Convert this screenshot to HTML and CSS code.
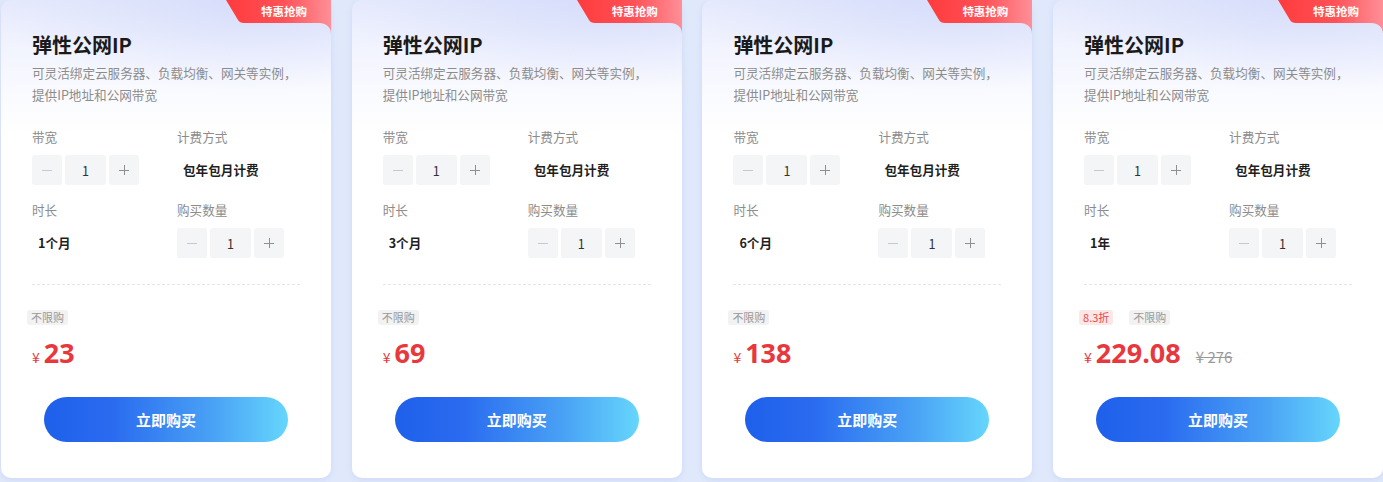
FILE: index.html
```html
<!DOCTYPE html>
<html lang="zh-CN">
<head>
    <meta charset="UTF-8">
    <meta name="viewport" content="width=device-width, initial-scale=1.0">
    <title>弹性公网IP</title>
    <link rel="stylesheet" href="styles.css">
</head>
<body>
    <div class="page">

        <div class="card">
            <div class="badge">
                <svg width="105" height="34" viewBox="0 0 105 34"><defs><linearGradient id="bg1" x1="0" x2="1" y1="0" y2="0"><stop offset="0" stop-color="#ff3b3d"/><stop offset="0.55" stop-color="#ff5257"/><stop offset="1" stop-color="#ff8f98"/></linearGradient></defs><path d="M0 0H105V34C105 27 100 23 93 23H18C15 23 13 22 12 20Z" fill="url(#bg1)"/></svg>
                <span>特惠抢购</span>
            </div>
            <h2 class="title">弹性公网IP</h2>
            <p class="desc">可灵活绑定云服务器、负载均衡、网关等实例，<br>提供IP地址和公网带宽</p>
            <div class="form">
                <div class="field">
                    <div class="label">带宽</div>
                    <div class="stepper">
                        <span class="btn minus"><svg width="10" height="10"><path d="M0 5.5H10" stroke="#c9c9c9"/></svg></span>
                        <span class="val">1</span>
                        <span class="btn"><svg width="10" height="10"><path d="M0 5.5H10M5.5 0V10" stroke="#8f8f8f"/></svg></span>
                    </div>
                </div>
                <div class="field">
                    <div class="label">计费方式</div>
                    <div class="value">包年包月计费</div>
                </div>
                <div class="field">
                    <div class="label">时长</div>
                    <div class="value">1个月</div>
                </div>
                <div class="field">
                    <div class="label">购买数量</div>
                    <div class="stepper">
                        <span class="btn minus"><svg width="10" height="10"><path d="M0 5.5H10" stroke="#c9c9c9"/></svg></span>
                        <span class="val">1</span>
                        <span class="btn"><svg width="10" height="10"><path d="M0 5.5H10M5.5 0V10" stroke="#8f8f8f"/></svg></span>
                    </div>
                </div>
            </div>
            <div class="divider"></div>
            <div class="tags"><span class="tag">不限购</span></div>
            <div class="price"><span class="cur">¥</span><span class="num">23</span></div>
            <button class="buy">立即购买</button>
        </div>

        <div class="card">
            <div class="badge">
                <svg width="105" height="34" viewBox="0 0 105 34"><defs><linearGradient id="bg2" x1="0" x2="1" y1="0" y2="0"><stop offset="0" stop-color="#ff3b3d"/><stop offset="0.55" stop-color="#ff5257"/><stop offset="1" stop-color="#ff8f98"/></linearGradient></defs><path d="M0 0H105V34C105 27 100 23 93 23H18C15 23 13 22 12 20Z" fill="url(#bg2)"/></svg>
                <span>特惠抢购</span>
            </div>
            <h2 class="title">弹性公网IP</h2>
            <p class="desc">可灵活绑定云服务器、负载均衡、网关等实例，<br>提供IP地址和公网带宽</p>
            <div class="form">
                <div class="field">
                    <div class="label">带宽</div>
                    <div class="stepper">
                        <span class="btn minus"><svg width="10" height="10"><path d="M0 5.5H10" stroke="#c9c9c9"/></svg></span>
                        <span class="val">1</span>
                        <span class="btn"><svg width="10" height="10"><path d="M0 5.5H10M5.5 0V10" stroke="#8f8f8f"/></svg></span>
                    </div>
                </div>
                <div class="field">
                    <div class="label">计费方式</div>
                    <div class="value">包年包月计费</div>
                </div>
                <div class="field">
                    <div class="label">时长</div>
                    <div class="value">3个月</div>
                </div>
                <div class="field">
                    <div class="label">购买数量</div>
                    <div class="stepper">
                        <span class="btn minus"><svg width="10" height="10"><path d="M0 5.5H10" stroke="#c9c9c9"/></svg></span>
                        <span class="val">1</span>
                        <span class="btn"><svg width="10" height="10"><path d="M0 5.5H10M5.5 0V10" stroke="#8f8f8f"/></svg></span>
                    </div>
                </div>
            </div>
            <div class="divider"></div>
            <div class="tags"><span class="tag">不限购</span></div>
            <div class="price"><span class="cur">¥</span><span class="num">69</span></div>
            <button class="buy">立即购买</button>
        </div>

        <div class="card">
            <div class="badge">
                <svg width="105" height="34" viewBox="0 0 105 34"><defs><linearGradient id="bg3" x1="0" x2="1" y1="0" y2="0"><stop offset="0" stop-color="#ff3b3d"/><stop offset="0.55" stop-color="#ff5257"/><stop offset="1" stop-color="#ff8f98"/></linearGradient></defs><path d="M0 0H105V34C105 27 100 23 93 23H18C15 23 13 22 12 20Z" fill="url(#bg3)"/></svg>
                <span>特惠抢购</span>
            </div>
            <h2 class="title">弹性公网IP</h2>
            <p class="desc">可灵活绑定云服务器、负载均衡、网关等实例，<br>提供IP地址和公网带宽</p>
            <div class="form">
                <div class="field">
                    <div class="label">带宽</div>
                    <div class="stepper">
                        <span class="btn minus"><svg width="10" height="10"><path d="M0 5.5H10" stroke="#c9c9c9"/></svg></span>
                        <span class="val">1</span>
                        <span class="btn"><svg width="10" height="10"><path d="M0 5.5H10M5.5 0V10" stroke="#8f8f8f"/></svg></span>
                    </div>
                </div>
                <div class="field">
                    <div class="label">计费方式</div>
                    <div class="value">包年包月计费</div>
                </div>
                <div class="field">
                    <div class="label">时长</div>
                    <div class="value">6个月</div>
                </div>
                <div class="field">
                    <div class="label">购买数量</div>
                    <div class="stepper">
                        <span class="btn minus"><svg width="10" height="10"><path d="M0 5.5H10" stroke="#c9c9c9"/></svg></span>
                        <span class="val">1</span>
                        <span class="btn"><svg width="10" height="10"><path d="M0 5.5H10M5.5 0V10" stroke="#8f8f8f"/></svg></span>
                    </div>
                </div>
            </div>
            <div class="divider"></div>
            <div class="tags"><span class="tag">不限购</span></div>
            <div class="price"><span class="cur">¥</span><span class="num">138</span></div>
            <button class="buy">立即购买</button>
        </div>

        <div class="card">
            <div class="badge">
                <svg width="105" height="34" viewBox="0 0 105 34"><defs><linearGradient id="bg4" x1="0" x2="1" y1="0" y2="0"><stop offset="0" stop-color="#ff3b3d"/><stop offset="0.55" stop-color="#ff5257"/><stop offset="1" stop-color="#ff8f98"/></linearGradient></defs><path d="M0 0H105V34C105 27 100 23 93 23H18C15 23 13 22 12 20Z" fill="url(#bg4)"/></svg>
                <span>特惠抢购</span>
            </div>
            <h2 class="title">弹性公网IP</h2>
            <p class="desc">可灵活绑定云服务器、负载均衡、网关等实例，<br>提供IP地址和公网带宽</p>
            <div class="form">
                <div class="field">
                    <div class="label">带宽</div>
                    <div class="stepper">
                        <span class="btn minus"><svg width="10" height="10"><path d="M0 5.5H10" stroke="#c9c9c9"/></svg></span>
                        <span class="val">1</span>
                        <span class="btn"><svg width="10" height="10"><path d="M0 5.5H10M5.5 0V10" stroke="#8f8f8f"/></svg></span>
                    </div>
                </div>
                <div class="field">
                    <div class="label">计费方式</div>
                    <div class="value">包年包月计费</div>
                </div>
                <div class="field">
                    <div class="label">时长</div>
                    <div class="value">1年</div>
                </div>
                <div class="field">
                    <div class="label">购买数量</div>
                    <div class="stepper">
                        <span class="btn minus"><svg width="10" height="10"><path d="M0 5.5H10" stroke="#c9c9c9"/></svg></span>
                        <span class="val">1</span>
                        <span class="btn"><svg width="10" height="10"><path d="M0 5.5H10M5.5 0V10" stroke="#8f8f8f"/></svg></span>
                    </div>
                </div>
            </div>
            <div class="divider"></div>
            <div class="tags"><span class="tag discount">8.3折</span><span class="tag">不限购</span></div>
            <div class="price"><span class="cur">¥</span><span class="num">229.08</span><span class="orig">¥ 276</span></div>
            <button class="buy">立即购买</button>
        </div>

    </div>
</body>
</html>
```

FILE: styles.css
```css
body {
    margin: 0;
    background: #e0e9fb;
    font-family: "Noto Sans CJK SC", "Noto Sans", sans-serif;
    overflow: hidden;
}
.page {
    display: flex;
    gap: 20.7px;
    padding-left: 1px;
    height: 482px;
}
.card {
    position: relative;
    flex: 0 0 329px;
    height: 478px;
    box-sizing: border-box;
    padding: 31px 31px 0;
    border-radius: 10px;
    background:
        radial-gradient(ellipse 260px 90px at 75% 0, rgba(208, 216, 250, 0.7), rgba(208, 216, 250, 0) 100%),
        linear-gradient(180deg, #e6eafc 0, #f1f3fe 45px, #f9faff 90px, #ffffff 135px);
    box-shadow: 0 2px 6px rgba(70, 110, 210, 0.12);
}
.badge {
    position: absolute;
    top: 0;
    right: 0;
    width: 105px;
    height: 34px;
}
.badge svg {
    display: block;
}
.badge span {
    position: absolute;
    top: 3px;
    left: 35px;
    font-size: 11.5px;
    line-height: 16px;
    font-weight: 700;
    color: #fff;
}
.title {
    margin: 0;
    font-size: 20px;
    line-height: 28px;
    font-weight: 700;
    color: #1a1a1a;
}
.desc {
    margin: 3px 0 0;
    font-size: 12.6px;
    line-height: 22px;
    color: #8c8c8c;
}
.form {
    display: grid;
    grid-template-columns: 145px 1fr;
    row-gap: 15px;
    margin-top: 21px;
}
.label {
    font-size: 12.6px;
    line-height: 20px;
    color: #8c8c8c;
    margin-bottom: 8px;
}
.value {
    height: 30px;
    line-height: 30px;
    padding-left: 6px;
    font-size: 12.6px;
    font-weight: 700;
    color: #1f1f1f;
}
.stepper {
    display: flex;
    gap: 3px;
    height: 30px;
}
.stepper .btn,
.stepper .val {
    display: flex;
    align-items: center;
    justify-content: center;
    background: #f4f5f6;
    border-radius: 3px;
}
.stepper .btn {
    width: 30px;
}
.stepper .val {
    width: 41px;
    font-size: 12.6px;
    color: #333;
}
.divider {
    margin-top: 26px;
    border-top: 1px dashed #e6e6e6;
    width: 268px;
}
.tags {
    display: flex;
    gap: 16px;
    margin: 25px 0 0 -5px;
}
.tag {
    height: 15px;
    line-height: 15px;
    padding: 0 4px;
    font-size: 11px;
    color: #999;
    background: #f2f2f2;
    border-radius: 3px;
}
.tag.discount {
    color: #e84a4a;
    background: #fde6e6;
}
.price {
    display: flex;
    align-items: baseline;
    margin-top: 12px;
    height: 32px;
    color: #e8383d;
}
.cur {
    font-size: 14px;
    margin-right: 4px;
}
.num {
    font-family: "Open Sans", "Noto Sans", sans-serif;
    font-size: 27px;
    font-weight: 700;
    line-height: 32px;
}
.orig {
    margin-left: 15px;
    font-size: 15px;
    color: #999;
    text-decoration: line-through;
}
.buy {
    display: block;
    margin: 28px 0 0 12px;
    width: 244px;
    height: 45px;
    border: none;
    border-radius: 23px;
    background: linear-gradient(90deg, #1e60ea 0%, #2a6bf0 28%, #4aa3f5 70%, #66d6fc 100%);
    color: #fff;
    font-family: "Noto Sans CJK SC", sans-serif;
    font-size: 15px;
    font-weight: 700;
    cursor: pointer;
}
```
